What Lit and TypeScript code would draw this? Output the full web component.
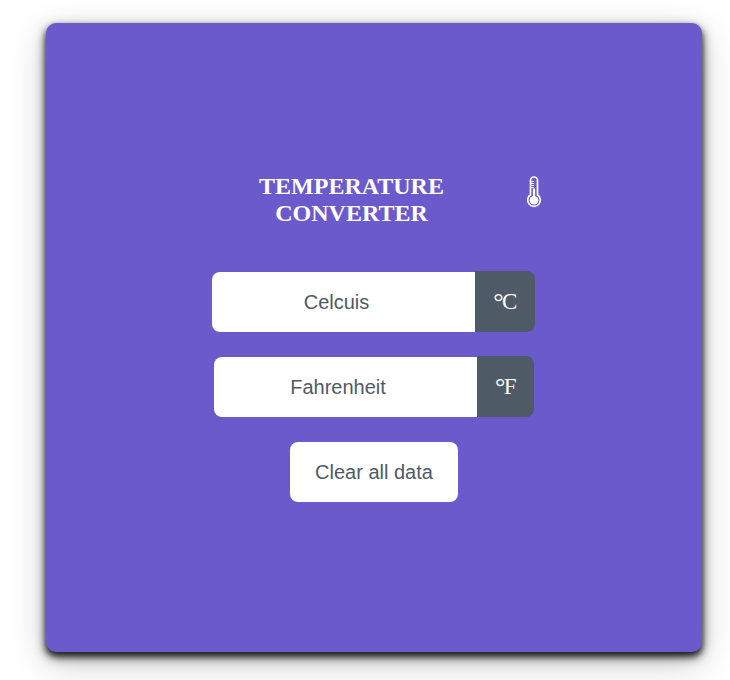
import { LitElement, html, css } from "lit";
import { customElement } from "lit/decorators.js";

@customElement("app-root")
export class AppRoot extends LitElement {
  static styles = css`
    :host {
      display: block;
      box-sizing: border-box;
      height: 680px;
      padding: 23px 28px 28px 46px;
      overflow: hidden;
      background: #fff;
      font-family: "Liberation Serif", serif;
    }
    .card {
      box-sizing: border-box;
      height: 629px;
      padding-top: 150px;
      border-radius: 10px;
      background: #6b5acc;
      color: #fff;
      display: flex;
      flex-direction: column;
      align-items: center;
      box-shadow: 0 4px 6px rgba(0, 0, 0, 0.75), 0 5px 12px rgba(0, 0, 0, 0.55),
        0 10px 34px rgba(0, 0, 0, 0.22);
    }
    .head {
      display: flex;
      align-items: flex-start;
      justify-content: space-between;
      width: 336px;
      height: 98px;
    }
    h1 {
      margin: 0;
      width: 291px;
      flex: none;
      font-size: 24px;
      line-height: 27px;
      font-weight: 700;
      text-align: center;
    }
    .thermo {
      flex: none;
      margin-top: 3px;
    }
    .row {
      display: flex;
      align-items: flex-end;
      height: 61px;
      margin-bottom: 24px;
    }
    .first {
      margin-right: 1px;
    }
    input,
    button {
      box-sizing: border-box;
      height: 60px;
      border: 0;
      padding: 0;
      margin: 0;
      background: #fff;
      color: #4e5a65;
      font: 20px "Liberation Sans", sans-serif;
      text-align: center;
      outline: 0;
    }
    input {
      width: 263px;
      padding-right: 15px;
      border-radius: 8px 0 0 8px;
    }
    .first input {
      padding-right: 14px;
    }
    input::placeholder {
      color: #4e5a65;
      opacity: 1;
    }
    .unit {
      box-sizing: border-box;
      height: 61px;
      line-height: 61px;
      border-radius: 0 8px 8px 0;
      background: #4e5a65;
      font-size: 23px;
      text-align: center;
    }
    .deg {
      font-size: 26px;
      line-height: 0;
      letter-spacing: -1.5px;
      vertical-align: -1px;
      margin-left: 0.5px;
    }
    .c {
      width: 60px;
    }
    .f {
      width: 57px;
    }
    button {
      width: 168px;
      margin-top: 1px;
      border-radius: 8px;
    }
  `;

  render() {
    return html`
      <main class="card">
        <div class="head">
          <h1>TEMPERATURE<br />CONVERTER</h1>
          <svg class="thermo" width="16" height="33" viewBox="0 0 16 33" fill="none">
            <path
              d="M4.5 18.8V4.5a3.5 3.5 0 0 1 7 0v14.3a6.3 6.3 0 1 1-7 0Z"
              stroke="#fff"
              stroke-width="1.7"
            />
            <path d="M8 12.5v11" stroke="#fff" stroke-width="2.2" />
            <circle cx="8" cy="24.3" r="4.3" fill="#fff" />
            <path d="M5 5.5h3M5 7.5h3M5 9.5h3M5 11.5h3" stroke="#fff" stroke-width="0.9" />
          </svg>
        </div>
        <div class="row first">
          <input placeholder="Celcuis" aria-label="Celcuis" />
          <span class="unit c"><span class="deg">°</span>C</span>
        </div>
        <div class="row">
          <input placeholder="Fahrenheit" aria-label="Fahrenheit" />
          <span class="unit f"><span class="deg">°</span>F</span>
        </div>
        <button>Clear all data</button>
      </main>
    `;
  }
}
